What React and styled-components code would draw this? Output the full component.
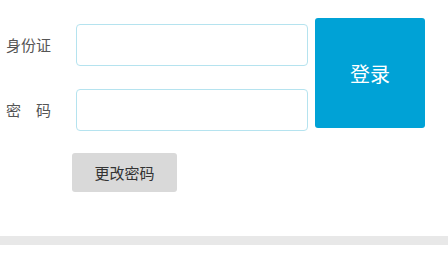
import React from "react";
import styled, { createGlobalStyle } from "styled-components";

const GlobalStyle = createGlobalStyle`
  body {
    margin: 0;
    background: #fff;
    font-family: "Noto Sans CJK SC", "Noto Sans", sans-serif;
  }
`;

export default function App() {
  return (
    <>
      <GlobalStyle />
      <Page>
        <LoginRow>
          <Fields>
            <Field>
              <Label>身份证</Label>
              <Input type="text" />
            </Field>
            <Field>
              <Label>密码</Label>
              <Input type="password" />
            </Field>
          </Fields>
          <LoginButton>登录</LoginButton>
        </LoginRow>
        <ChangeButton>更改密码</ChangeButton>
      </Page>
      <Divider />
    </>
  );
}

const Page = styled.div`
  display: flex;
  flex-direction: column;
  padding: 18px 0 0 6px;
`;

const LoginRow = styled.div`
  display: flex;
  align-items: flex-start;
  gap: 7px;
`;

const Fields = styled.div`
  display: flex;
  flex-direction: column;
  gap: 23px;
  padding-top: 6px;
`;

const Field = styled.div`
  display: flex;
  align-items: center;
`;

const Label = styled.span`
  width: 45px;
  margin-right: 25px;
  font-size: 15px;
  color: #555;
  text-align: justify;
  text-align-last: justify;
  line-height: 1;
  padding-bottom: 2px;
`;

const Input = styled.input`
  box-sizing: border-box;
  width: 232px;
  height: 42px;
  border: 1px solid #b5e3ef;
  border-radius: 4px;
  outline: none;
  padding: 0 10px;
  font-size: 14px;
  background: #fff;
`;

const LoginButton = styled.button`
  width: 110px;
  height: 110px;
  border: none;
  border-radius: 3px;
  background: #00a2d6;
  color: #fff;
  font-size: 20px;
  font-family: "Noto Sans CJK SC", sans-serif;
  cursor: pointer;
`;

const ChangeButton = styled.button`
  align-self: flex-start;
  margin: 22px 0 0 66px;
  width: 105px;
  height: 39px;
  border: none;
  border-radius: 3px;
  background: #d9d9d9;
  color: #333;
  font-size: 15px;
  font-family: "Noto Sans CJK SC", sans-serif;
  cursor: pointer;
`;

const Divider = styled.div`
  margin-top: 44px;
  height: 9px;
  background: #e8e8e8;
`;
